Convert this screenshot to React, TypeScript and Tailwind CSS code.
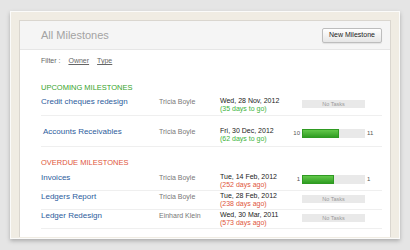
import React from "react"

type Milestone = {
  name: string
  owner: string
  date: string
  due: string
  progress?: { done: number; total: number; fill: number }
  indent?: boolean
  className: string
}

const upcoming: Milestone[] = [
  {
    name: "Credit cheques redesign",
    owner: "Tricia Boyle",
    date: "Wed, 28 Nov, 2012",
    due: "(35 days to go)",
    className: "pt-[2px] pb-[2px]",
  },
  {
    name: "Accounts Receivables",
    owner: "Tricia Boyle",
    date: "Fri, 30 Dec, 2012",
    due: "(62 days to go)",
    progress: { done: 10, total: 11, fill: 37 },
    indent: true,
    className: "pt-[11px] pb-[3px]",
  },
]

const overdue: Milestone[] = [
  {
    name: "Invoices",
    owner: "Tricia Boyle",
    date: "Tue, 14 Feb, 2012",
    due: "(252 days ago)",
    progress: { done: 1, total: 1, fill: 32 },
    className: "pt-[2px] pb-px",
  },
  {
    name: "Ledgers Report",
    owner: "Tricia Boyle",
    date: "Tue, 28 Feb, 2012",
    due: "(238 days ago)",
    className: "pt-px pb-px",
  },
  {
    name: "Ledger Redesign",
    owner: "Einhard Klein",
    date: "Wed, 30 Mar, 2011",
    due: "(573 days ago)",
    className: "pt-px pb-px",
  },
]

function Row({ m, late }: { m: Milestone; late?: boolean }) {
  return (
    <div className={`flex items-start border-b border-[#efefef] ${m.className}`}>
      <div className={`w-[118px] text-[8px] leading-[10px] text-[#2d5c9c] ${m.indent ? "pl-[2px]" : ""}`}>
        {m.name}
      </div>
      <div className="w-[61px] text-[7px] leading-[10px] text-[#777]">{m.owner}</div>
      <div className="w-[72px] text-[7px] leading-[8px]">
        <div className="text-[#222]">{m.date}</div>
        <div className={late ? "text-[#e0553b]" : "text-[#3cb43a]"}>{m.due}</div>
      </div>
      {m.progress ? (
        <div className="flex items-start">
          <div className="w-[8px] text-right text-[6px] leading-[13px] text-[#555]">{m.progress.done}</div>
          <div className="ml-[2px] mt-[2px] h-[9px] w-[63px] bg-[#e9e9e9]">
            <div
              className="h-full border border-[#2f9a22] bg-gradient-to-b from-[#62c84a] to-[#2f9e22]"
              style={{ width: m.progress.fill }}
            />
          </div>
          <div className="ml-[2px] text-[6px] leading-[13px] text-[#555]">{m.progress.total}</div>
        </div>
      ) : (
        <div className="ml-[10px] mt-[3px] flex h-[8px] w-[63px] items-center justify-center bg-[#e9e9e9] text-[5.5px] text-[#999]">
          No Tasks
        </div>
      )}
    </div>
  )
}

export default function App() {
  return (
    <div
      className="h-[250px] w-[410px] bg-[#e5e5e5] pl-[10px] pt-[11px]"
      style={{ fontFamily: '"Liberation Sans", Arial, sans-serif' }}
    >
      <div className="flex h-[228px] w-[390px] flex-col border border-[#fbfbfa] bg-[#f0ece3] px-[8px] pb-px pt-[8px] shadow-[0_2px_4px_rgba(0,0,0,0.25)]">
        <div className="flex-1 overflow-hidden border border-b-0 border-[#dad6cf] bg-white">
          <div className="flex h-[29px] items-center justify-between border-b border-[#e6e6e6] bg-[#f5f5f5] pl-[21px] pr-[8px]">
            <span className="text-[11px] text-[#a3a3a3]">All Milestones</span>
            <button className="h-[15px] w-[60px] rounded-[2px] border border-[#bdbdbd] bg-gradient-to-b from-white to-[#e6e6e6] text-[7px] text-[#222] shadow-[0_1px_1px_rgba(0,0,0,0.08)]">
              New Milestone
            </button>
          </div>

          <div className="pl-[21px] pr-[8px]">
            <div className="mt-[6px] flex gap-[8px] text-[7px] leading-[10px] text-[#666]">
              <span>Filter :</span>
              <span className="underline">Owner</span>
              <span className="underline">Type</span>
            </div>

            <div className="mt-[17px] text-[7.5px] leading-[10px] text-[#36a42a]">UPCOMING MILESTONES</div>
            <div className="mt-[2px]">
              {upcoming.map((m) => (
                <Row key={m.name} m={m} />
              ))}
            </div>

            <div className="mt-[11px] text-[7.5px] leading-[10px] text-[#e0553b]">OVERDUE MILESTONES</div>
            <div className="mt-[3px]">
              {overdue.map((m) => (
                <Row key={m.name} m={m} late />
              ))}
            </div>
          </div>
        </div>
      </div>
    </div>
  )
}
